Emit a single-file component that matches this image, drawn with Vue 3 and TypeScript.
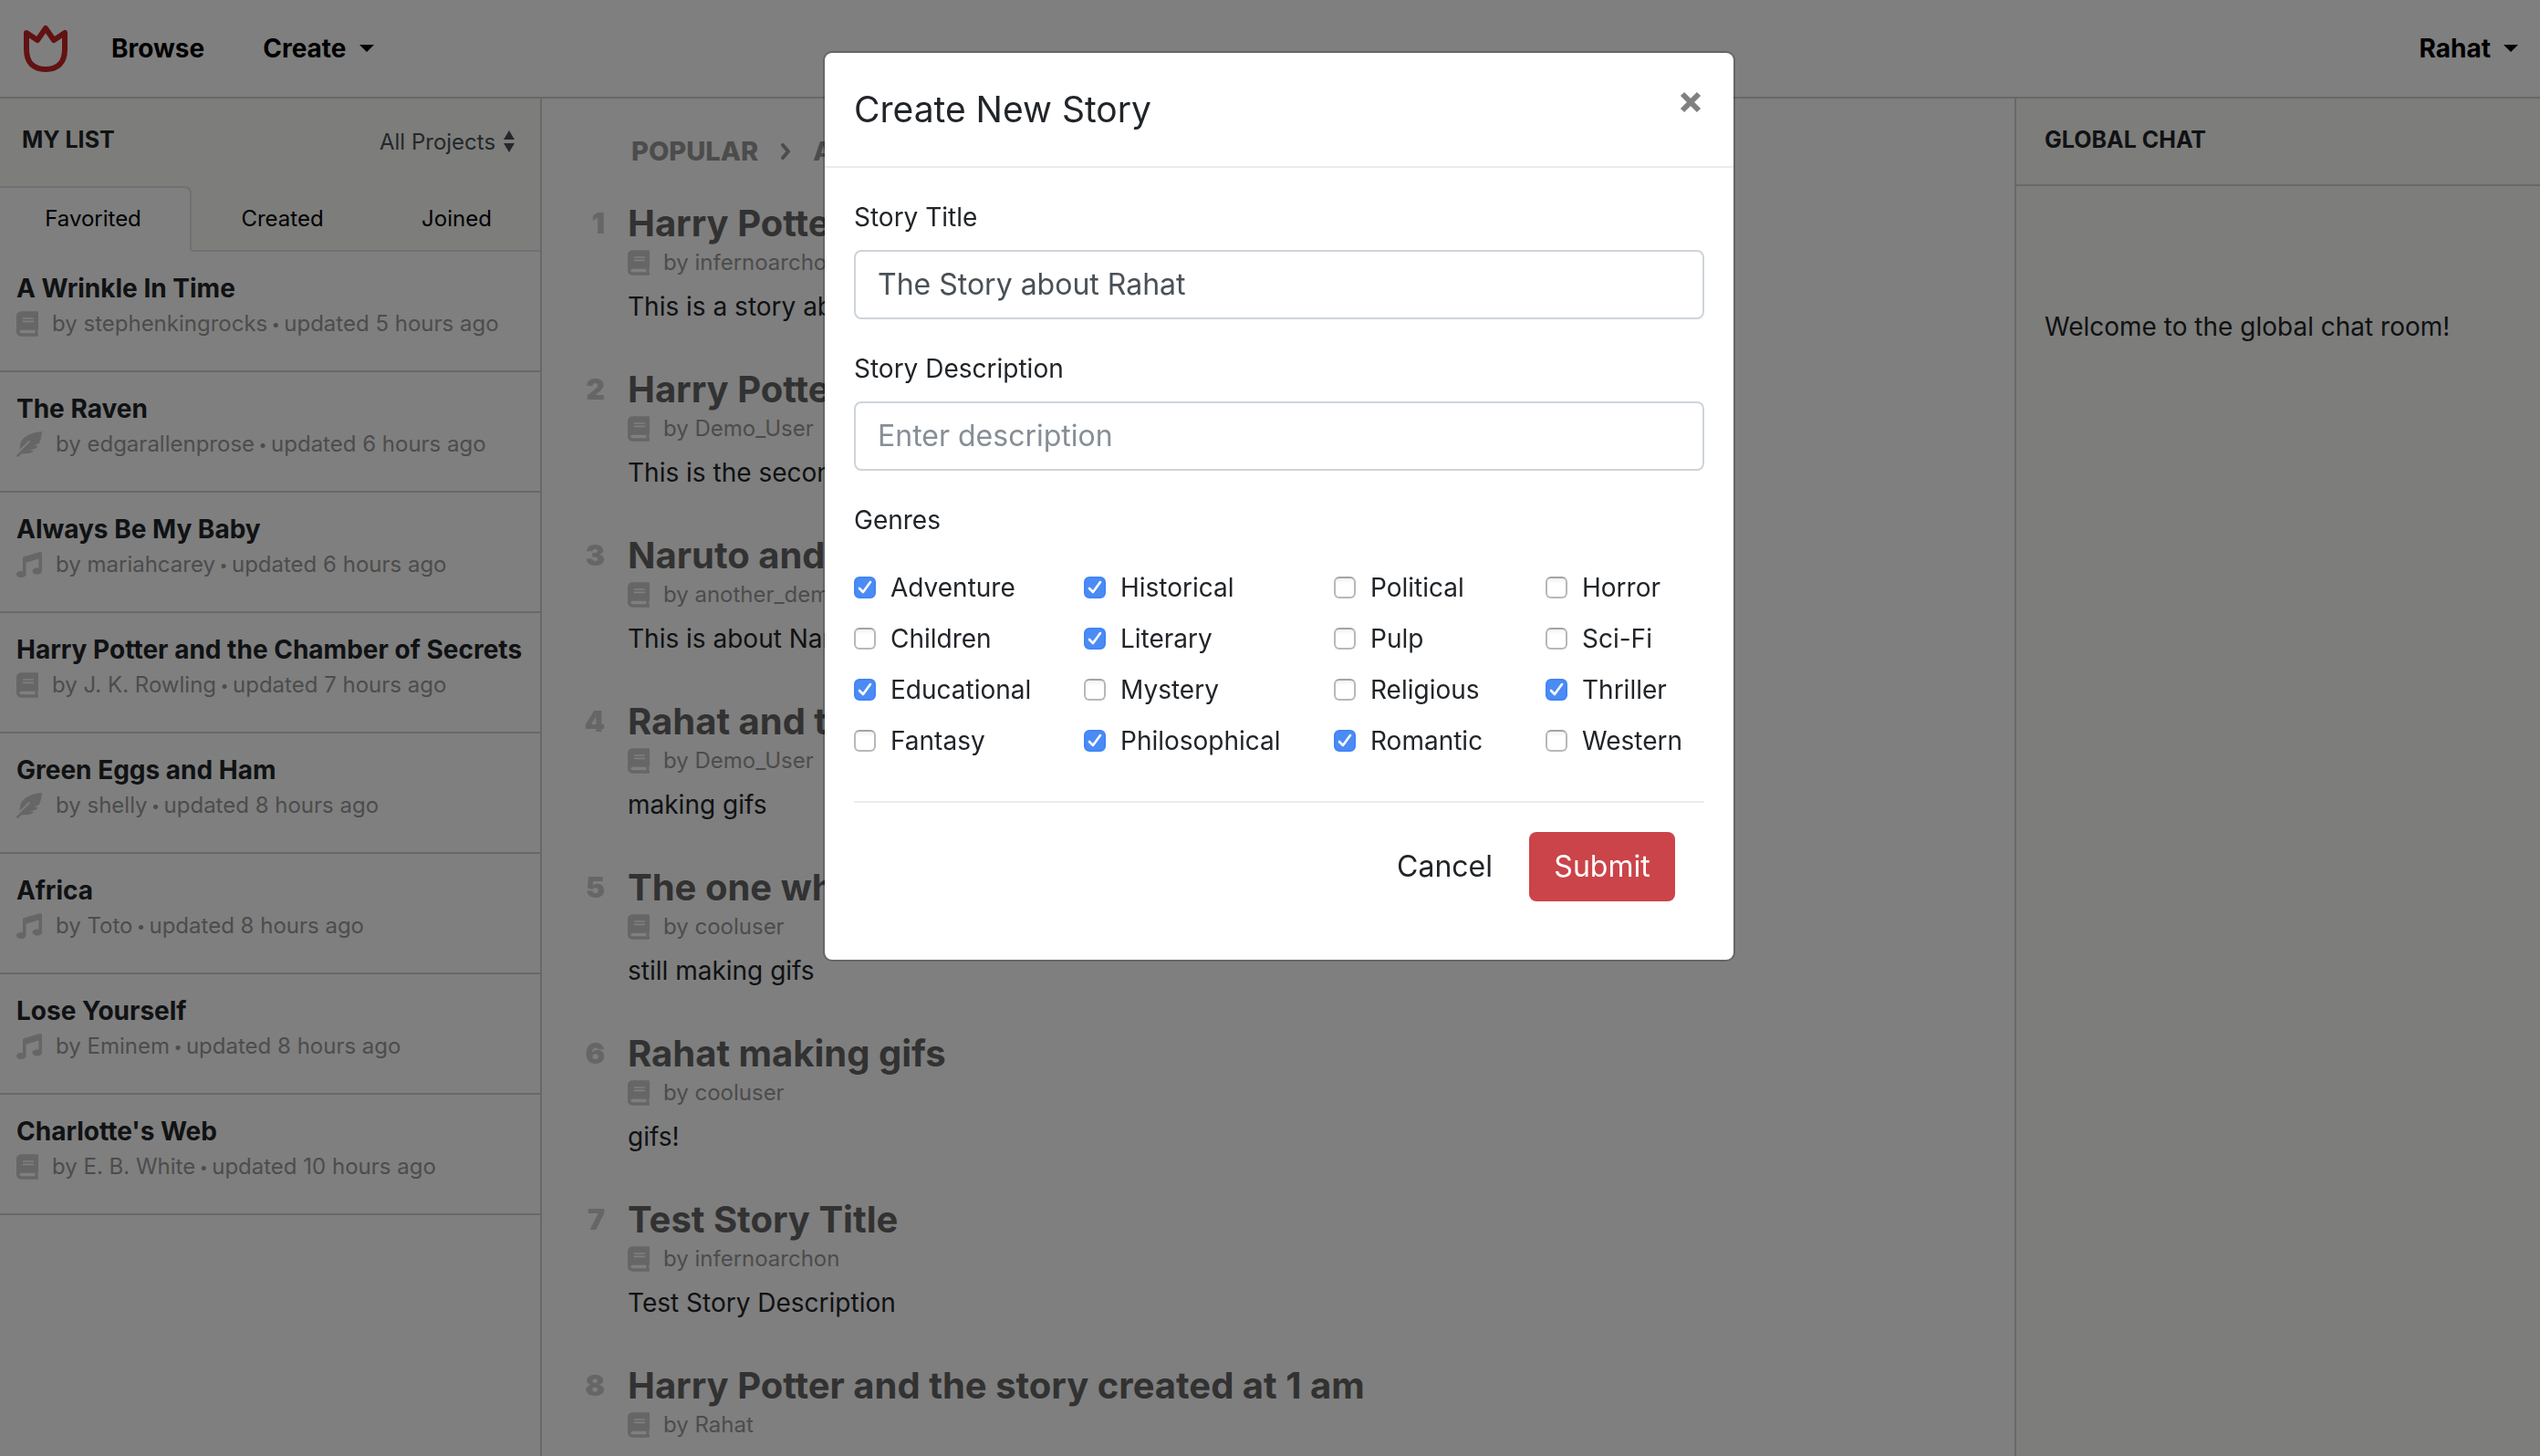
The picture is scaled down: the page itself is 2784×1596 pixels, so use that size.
<script setup lang="ts">
import { ref } from 'vue'

type Kind = 'book' | 'feather' | 'music'

interface Project {
  title: string
  kind: Kind
  author: string
  updated: string
}

interface Story {
  title: string
  author: string
  text: string
}

const icons: Record<Kind, { box: string; wide: boolean; d: string }> = {
  book: {
    box: '0 0 448 512',
    wide: false,
    d: 'M448 360V24c0-13.3-10.7-24-24-24H96C43 0 0 43 0 96v320c0 53 43 96 96 96h328c13.3 0 24-10.7 24-24v-16c0-7.5-3.5-14.3-8.9-18.7-4.2-15.4-4.2-59.3 0-74.7 5.4-4.3 8.9-11.1 8.9-18.6zM128 134c0-3.3 2.7-6 6-6h212c3.3 0 6 2.7 6 6v20c0 3.3-2.7 6-6 6H134c-3.3 0-6-2.7-6-6v-20zm0 64c0-3.3 2.7-6 6-6h212c3.3 0 6 2.7 6 6v20c0 3.3-2.7 6-6 6H134c-3.3 0-6-2.7-6-6v-20zm253.4 250H96c-17.7 0-32-14.3-32-32 0-17.6 14.4-32 32-32h285.4c-1.9 17.1-1.9 46.9 0 64z',
  },
  feather: {
    box: '0 0 512 512',
    wide: true,
    d: 'M512 0C460.22 3.56 96.44 38.2 71.01 287.61c-3.09 26.66-4.84 53.44-5.99 80.24l178.87-178.69c6.25-6.25 16.4-6.25 22.65 0s6.25 16.38 0 22.63L7.04 471.03c-9.38 9.37-9.38 24.57 0 33.94 9.38 9.37 24.59 9.37 33.98 0l57.13-57.07c42.09-.14 84.15-2.53 125.96-7.36 53.48-5.44 97.02-26.47 132.58-56.54H255.74l146.79-48.88c11.25-14.89 21.37-30.71 30.45-47.12h-81.14l106.54-53.21C500.29 132.86 510.19 26.26 512 0z',
  },
  music: {
    box: '0 0 512 512',
    wide: true,
    d: 'M511.99 32.01c0-21.71-21.1-37.01-41.6-30.51L150.4 96c-13.3 4.2-22.4 16.5-22.4 30.5v261.42c-10.05-2.38-20.72-3.92-32-3.92-53.02 0-96 28.65-96 64s42.98 64 96 64 96-28.65 96-64V214.31l256-75.02v184.63c-10.05-2.38-20.72-3.92-32-3.92-53.02 0-96 28.65-96 64s42.98 64 96 64 96-28.65 96-64l-.01-351.99z',
  },
}

const projects: Project[] = [
  { title: 'A Wrinkle In Time', kind: 'book', author: 'stephenkingrocks', updated: '5 hours ago' },
  { title: 'The Raven', kind: 'feather', author: 'edgarallenprose', updated: '6 hours ago' },
  { title: 'Always Be My Baby', kind: 'music', author: 'mariahcarey', updated: '6 hours ago' },
  { title: 'Harry Potter and the Chamber of Secrets', kind: 'book', author: 'J. K. Rowling', updated: '7 hours ago' },
  { title: 'Green Eggs and Ham', kind: 'feather', author: 'shelly', updated: '8 hours ago' },
  { title: 'Africa', kind: 'music', author: 'Toto', updated: '8 hours ago' },
  { title: 'Lose Yourself', kind: 'music', author: 'Eminem', updated: '8 hours ago' },
  { title: "Charlotte's Web", kind: 'book', author: 'E. B. White', updated: '10 hours ago' },
]

const stories: Story[] = [
  { title: 'Harry Potter', author: 'infernoarchon', text: 'This is a story about' },
  { title: 'Harry Potter', author: 'Demo_User', text: 'This is the second' },
  { title: 'Naruto and', author: 'another_demo', text: 'This is about Naruto' },
  { title: 'Rahat and the', author: 'Demo_User', text: 'making gifs' },
  { title: 'The one who', author: 'cooluser', text: 'still making gifs' },
  { title: 'Rahat making gifs', author: 'cooluser', text: 'gifs!' },
  { title: 'Test Story Title', author: 'infernoarchon', text: 'Test Story Description' },
  { title: 'Harry Potter and the story created at 1 am', author: 'Rahat', text: '' },
]

const genres = [
  ['Adventure', 'Children', 'Educational', 'Fantasy'],
  ['Historical', 'Literary', 'Mystery', 'Philosophical'],
  ['Political', 'Pulp', 'Religious', 'Romantic'],
  ['Horror', 'Sci-Fi', 'Thriller', 'Western'],
]

const picked = ref<string[]>([
  'Adventure', 'Educational', 'Historical', 'Literary', 'Philosophical', 'Romantic', 'Thriller',
])
const storyTitle = ref('The Story about Rahat')
const storyDescription = ref('')
</script>

<template>
  <div class="page">
    <header class="topbar">
      <a href="#" class="logo" aria-label="Home">
        <svg viewBox="0 0 48 52" width="48" height="52">
          <path d="M3 9 L15 17 L24 4 L33 17 L45 9 V27 C45 42 37 49 24 49 S3 42 3 27 Z" />
        </svg>
      </a>
      <a href="#" class="nav browse">Browse</a>
      <button type="button" class="nav">Create<span class="caret"></span></button>
      <button type="button" class="nav user">Rahat<span class="caret"></span></button>
    </header>

    <div class="columns">
      <aside class="side left">
        <div class="side-head">
          <h2>MY LIST</h2>
          <label class="filter">
            <select aria-label="Project filter"><option>All Projects</option></select>
            <svg viewBox="0 0 12 24" width="12" height="24"><path d="M0 10 6 0l6 10zM0 14h12L6 24z" /></svg>
          </label>
        </div>
        <nav class="tabs">
          <a href="#" class="tab active">Favorited</a>
          <a href="#" class="tab">Created</a>
          <a href="#" class="tab">Joined</a>
        </nav>
        <ul class="projects">
          <li v-for="p in projects" :key="p.title">
            <h3>{{ p.title }}</h3>
            <p class="meta">
              <svg class="icon" :class="{ wide: icons[p.kind].wide }" :viewBox="icons[p.kind].box"><path :d="icons[p.kind].d" /></svg>
              <span>by {{ p.author }}<span class="dot"> • </span>updated {{ p.updated }}</span>
            </p>
          </li>
        </ul>
      </aside>

      <main class="feed">
        <div class="crumbs">
          <a href="#">POPULAR</a>
          <svg viewBox="0 0 12 18" width="12" height="18"><path d="M3 2l6 7-6 7" /></svg>
          <a href="#">ALL</a>
        </div>
        <ol class="stories">
          <li v-for="(s, i) in stories" :key="i">
            <span class="rank">{{ i + 1 }}</span>
            <div>
              <h2>{{ s.title }}</h2>
              <p class="meta">
                <svg class="icon" :viewBox="icons.book.box"><path :d="icons.book.d" /></svg>
                <span>by {{ s.author }}</span>
              </p>
              <p class="text">{{ s.text }}</p>
            </div>
          </li>
        </ol>
      </main>

      <aside class="side right">
        <div class="side-head"><h2>GLOBAL CHAT</h2></div>
        <p class="welcome">Welcome to the global chat room!</p>
      </aside>
    </div>

    <div class="backdrop">
      <section class="modal" role="dialog" aria-labelledby="modal-title">
        <div class="modal-head">
          <h1 id="modal-title">Create New Story</h1>
          <button type="button" class="close" aria-label="Close">
            <svg viewBox="0 0 24 24" width="24" height="24"><path d="M3 3l18 18M21 3L3 21" /></svg>
          </button>
        </div>
        <form class="modal-body" @submit.prevent>
          <div class="field">
            <label for="story-title">Story Title</label>
            <input id="story-title" v-model="storyTitle" type="text" />
          </div>
          <div class="field">
            <label for="story-description">Story Description</label>
            <input id="story-description" v-model="storyDescription" type="text" placeholder="Enter description" />
          </div>
          <fieldset>
            <legend>Genres</legend>
            <div class="genres">
              <div v-for="(column, c) in genres" :key="c">
                <label v-for="g in column" :key="g" class="genre">
                  <input v-model="picked" type="checkbox" :value="g" />
                  <span>{{ g }}</span>
                </label>
              </div>
            </div>
          </fieldset>
          <div class="actions">
            <button type="button" class="cancel">Cancel</button>
            <button type="submit" class="submit">Submit</button>
          </div>
        </form>
      </section>
    </div>
  </div>
</template>

<style>
html,
body {
  height: 100%;
  overflow: hidden;
}
</style>

<style scoped>
.page {
  height: 100vh;
  display: flex;
  flex-direction: column;
  overflow: hidden;
  background: #fff;
  color: #212529;
  font-family: Inter, 'Liberation Sans', sans-serif;
  font-size: 28px;
}
.page * {
  box-sizing: border-box;
}
h1,
h2,
h3,
p,
ul,
ol {
  margin: 0;
  padding: 0;
  list-style: none;
}
a {
  color: #000;
  text-decoration: none;
}
button,
input,
select {
  font: inherit;
  margin: 0;
}
button {
  border: 0;
  background: none;
  padding: 0;
}
.topbar {
  flex: none;
  display: flex;
  align-items: center;
  height: 108px;
  padding: 0 24px 0 26px;
  border-bottom: 2px solid #d0d0d0;
}
.logo {
  display: flex;
}
.logo path {
  fill: none;
  stroke: #c42426;
  stroke-width: 6;
  stroke-linejoin: round;
}
.nav {
  display: flex;
  align-items: center;
  gap: 14px;
  color: #000;
  font-weight: 700;
}
.browse {
  margin: 0 64px 0 48px;
}
.user {
  margin-left: auto;
}
.caret {
  border: 8px solid transparent;
  border-top-color: #000;
  border-bottom: 0;
}
.columns {
  flex: 1;
  min-height: 0;
  display: flex;
}
.side {
  flex: none;
  display: flex;
  flex-direction: column;
}
.left {
  width: 594px;
  border-right: 2px solid #d0d0d0;
}
.right {
  width: 576px;
  border-left: 2px solid #d0d0d0;
  background: #fafaf6;
}
.side-head {
  display: flex;
  justify-content: space-between;
  align-items: center;
  height: 96px;
  padding: 0 28px 6px 24px;
  background: #fafaf6;
}
.right .side-head {
  padding: 0 31px 4px;
  border-bottom: 2px solid #d0d0d0;
}
.side-head h2 {
  font-size: 25px;
  font-weight: 700;
  line-height: 40px;
}
.filter {
  display: flex;
  align-items: center;
  gap: 8px;
  padding-top: 4px;
}
.filter select {
  appearance: none;
  border: 0;
  padding: 0;
  background: none;
  color: #495057;
  font-size: 24px;
}
.filter path {
  fill: #495057;
}
.tabs {
  display: flex;
  background: #fafaf6;
}
.tab {
  flex: 1;
  height: 72px;
  padding-left: 8px;
  border-top: 2px solid transparent;
  border-bottom: 2px solid #dee2e6;
  text-align: center;
  font-size: 24px;
  line-height: 68px;
}
.tab.active {
  flex: none;
  width: 210px;
  padding: 0 4px 0 0;
  border-top-color: #dee2e6;
  border-right: 2px solid #dee2e6;
  border-bottom-color: #fff;
  border-top-right-radius: 8px;
  background: #fff;
}
.projects {
  background: #fff;
}
.projects li {
  padding: 22px 18px 30px;
  border-bottom: 2px solid #d0d0d0;
}
.projects h3 {
  font-size: 28px;
  font-weight: 700;
  line-height: 36px;
  white-space: nowrap;
}
.meta {
  display: flex;
  align-items: center;
  gap: 15px;
  color: #999;
  font-size: 24px;
  line-height: 42px;
  white-space: nowrap;
}
.dot {
  font-size: 16px;
  line-height: 1;
  vertical-align: 2px;
}
.icon {
  width: 24px;
  height: 28px;
  fill: #ccc;
}
.icon.wide {
  width: 28px;
}
.feed {
  flex: 1;
  min-width: 0;
  padding-top: 38px;
}
.crumbs {
  display: flex;
  align-items: center;
  gap: 24px;
  padding-left: 98px;
  font-size: 29px;
  font-weight: 800;
  line-height: 40px;
}
.crumbs a {
  color: #999;
}
.crumbs path {
  fill: none;
  stroke: #999;
  stroke-width: 4;
  stroke-linecap: round;
  stroke-linejoin: round;
}
.stories {
  padding-top: 35px;
}
.stories li {
  display: flex;
  gap: 25px;
  padding-bottom: 38px;
}
.rank {
  width: 69px;
  text-align: right;
  color: #ccc;
  font-size: 32px;
  font-weight: 900;
  line-height: 48px;
}
.stories h2 {
  color: #646464;
  font-size: 40px;
  font-weight: 700;
  line-height: 48px;
  white-space: nowrap;
}
.stories .meta {
  line-height: 38px;
}
.text {
  min-height: 58px;
  line-height: 58px;
}
.welcome {
  padding: 134px 31px 0;
  line-height: 40px;
  white-space: nowrap;
}
.backdrop {
  position: fixed;
  inset: 0;
  display: flex;
  justify-content: center;
  align-items: flex-start;
  padding: 56px 0 0 20px;
  background: rgba(0, 0, 0, 0.5);
}
.modal {
  width: 1000px;
  border: 2px solid rgba(0, 0, 0, 0.2);
  border-radius: 10px;
  background: #fff;
  background-clip: padding-box;
}
.modal-head {
  display: flex;
  justify-content: space-between;
  align-items: flex-start;
  padding: 32px;
  border-bottom: 2px solid #e9ecef;
}
.modal-head h1 {
  font-size: 39px;
  font-weight: 400;
  line-height: 60px;
}
.close {
  display: flex;
  padding: 10px 3px;
}
.close path {
  fill: none;
  stroke: #808080;
  stroke-width: 6;
}
.modal-body {
  padding: 32px 32px 64px;
}
.field {
  display: flex;
  flex-direction: column;
  gap: 14px;
  margin-bottom: 32px;
  line-height: 44px;
}
.field input {
  width: 100%;
  height: 76px;
  padding: 0 24px 2px;
  border: 2px solid #ced4da;
  border-radius: 8px;
  color: #495057;
  font-size: 32px;
}
.field input::placeholder {
  color: #868e96;
}
fieldset {
  margin: 0;
  padding: 0 0 38px;
  border: 0;
  border-bottom: 2px solid #e9ecef;
}
legend {
  padding: 0;
  line-height: 44px;
}
.genres {
  display: grid;
  grid-template-columns: 252fr 274fr 232fr 174fr;
  padding-top: 24px;
}
.genre {
  display: flex;
  align-items: center;
  gap: 16px;
  line-height: 56px;
}
.genre input {
  appearance: none;
  width: 24px;
  height: 24px;
  border: 2px solid #b8b8b8;
  border-top-color: #a4a4a4;
  border-radius: 6px;
  background: linear-gradient(#f2f2f2, #fff 6px);
}
.genre input:checked {
  border-color: #4285f4;
  background: #4b8bf5
    url("data:image/svg+xml,%3Csvg xmlns='http://www.w3.org/2000/svg' viewBox='0 0 20 20'%3E%3Cpath d='M4 11l4 4L16 4' fill='none' stroke='white' stroke-width='2.6' stroke-linecap='round' stroke-linejoin='round'/%3E%3C/svg%3E")
    center / 20px no-repeat;
}
.actions {
  display: flex;
  justify-content: flex-end;
  gap: 16px;
  padding: 32px 32px 0 0;
  font-size: 32px;
}
.actions button {
  height: 76px;
  padding: 0 24px 2px;
  border-radius: 8px;
}
.cancel {
  color: #212529;
}
.actions .submit {
  min-width: 160px;
  background: #cb444a;
  color: #fff;
}
</style>
